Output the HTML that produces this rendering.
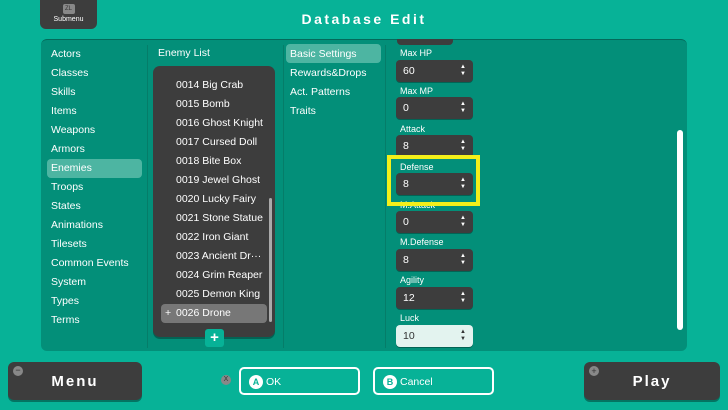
<!DOCTYPE html>
<html><head><style>
*{margin:0;padding:0;box-sizing:border-box}
body{width:728px;height:410px;background:#07b297;font-family:"Liberation Sans","DejaVu Sans",sans-serif;position:relative;overflow:hidden;color:#fff}
.a{position:absolute}
.t{font-size:10.5px;white-space:nowrap}
.box{position:absolute;left:396px;width:77px;height:22px;background:#3d3d3d;border-radius:4px;font-size:10.5px;padding:5px 0 0 7px;box-shadow:0 1px 0 rgba(0,0,0,.3)}
.box:after{content:"▲\A▼";white-space:pre;position:absolute;right:7px;top:4px;font-size:6px;line-height:7px}
.lbl{position:absolute;left:400px;font-size:9px}
.btn{position:absolute;background:#3d3d3d;border-radius:6px;font-weight:bold;font-size:15px;letter-spacing:2px;text-align:center;box-shadow:0 2px 0 rgba(0,0,0,.35)}
.ob{position:absolute;border:2px solid #fff;border-radius:5px;height:28px;width:121px;font-size:10.5px;padding:6px 0 0 8px}
.ob i{display:inline-block;width:14px;height:14px;border-radius:7px;background:#fff;color:#07b297;font-style:normal;font-size:9px;text-align:center;line-height:14px;margin-right:3px;font-weight:bold}
</style></head><body>
<div class="a" style="left:40px;top:0;width:57px;height:29px;background:#3d3d3d;border-radius:0 0 6px 6px;text-align:center;font-size:7px;padding-top:4px"><div style="width:12px;height:10px;background:#888;margin:0 auto 2px;border-radius:2px;font-size:6px;line-height:10px;color:#333">ZL</div>Submenu</div>
<div class="a" style="left:0;width:728px;top:11px;text-align:center;font-size:14px;font-weight:bold;letter-spacing:2.5px">Database Edit</div>
<div class="a" style="left:41px;top:39px;width:646px;height:312px;background:#038f79;border-radius:6px;border-top:1px solid #046a5a"></div>
<div class="a" style="left:147px;top:45px;width:1px;height:303px;background:#057d69"></div>
<div class="a" style="left:283px;top:45px;width:1px;height:303px;background:#057d69"></div>
<div class="a" style="left:385px;top:45px;width:1px;height:303px;background:#057d69"></div>
<div class="a" style="left:47px;top:159px;width:95px;height:19px;background:#4db5a2;border-radius:4px"></div>
<div class="a t" style="left:51px;top:45px;line-height:19px">Actors<br>Classes<br>Skills<br>Items<br>Weapons<br>Armors<br>Enemies<br>Troops<br>States<br>Animations<br>Tilesets<br>Common Events<br>System<br>Types<br>Terms</div>
<div class="a t" style="left:158px;top:47px">Enemy List</div>
<div class="a" style="left:153px;top:66px;width:122px;height:271px;background:#3d3d3d;border-radius:7px;box-shadow:0 2px 0 rgba(0,0,0,.3)"></div>
<div class="a" style="left:161px;top:304px;width:106px;height:19px;background:#777;border-radius:4px"></div>
<div class="a" style="left:269px;top:198px;width:3px;height:124px;background:#aaa;border-radius:2px"></div>
<div class="a t" style="left:176px;top:76px;line-height:19px">0014 Big Crab<br>0015 Bomb<br>0016 Ghost Knight<br>0017 Cursed Doll<br>0018 Bite Box<br>0019 Jewel Ghost<br>0020 Lucky Fairy<br>0021 Stone Statue<br>0022 Iron Giant<br>0023 Ancient Dr···<br>0024 Grim Reaper<br>0025 Demon King<br>0026 Drone</div>
<div class="a t" style="left:165px;top:304px;line-height:19px">+</div>
<div class="a" style="left:205px;top:329px;width:19px;height:18px;background:#07b297;border-radius:3px;text-align:center;font-weight:bold;font-size:15px;line-height:17px">+</div>
<div class="a" style="left:286px;top:44px;width:95px;height:19px;background:#4db5a2;border-radius:4px"></div>
<div class="a t" style="left:290px;top:45px;line-height:19px">Basic Settings<br>Rewards&amp;Drops<br>Act. Patterns<br>Traits</div>
<div class="a" style="left:397px;top:39px;width:56px;height:6px;background:#3d3d3d;border-radius:0 0 4px 4px"></div>
<div class="lbl" style="top:48px">Max HP</div><div class="box" style="top:60px">60</div>
<div class="lbl" style="top:86px">Max MP</div><div class="box" style="top:97px">0</div>
<div class="lbl" style="top:124px">Attack</div><div class="box" style="top:135px">8</div>
<div class="lbl" style="top:162px">Defense</div><div class="box" style="top:173px">8</div>
<div class="lbl" style="top:200px">M.Attack</div><div class="box" style="top:211px">0</div>
<div class="lbl" style="top:237px">M.Defense</div><div class="box" style="top:249px">8</div>
<div class="lbl" style="top:275px">Agility</div><div class="box" style="top:287px">12</div>
<div class="lbl" style="top:313px">Luck</div><div class="box" style="top:325px;background:#e3f3ef;color:#333">10</div>
<div class="a" style="left:387px;top:155px;width:93px;height:51px;border:4px solid #f4ef1a"></div>
<div class="a" style="left:677px;top:130px;width:6px;height:200px;background:#fff;border-radius:3px"></div>
<div class="btn" style="left:8px;top:362px;width:134px;height:38px;line-height:40px">Menu</div>
<div class="a" style="left:13px;top:366px;width:10px;height:10px;border-radius:5px;background:#888;font-size:9px;line-height:9px;text-align:center;color:#333">−</div>
<div class="btn" style="left:584px;top:362px;width:136px;height:38px;line-height:40px">Play</div>
<div class="a" style="left:589px;top:366px;width:10px;height:10px;border-radius:5px;background:#888;font-size:9px;line-height:10px;text-align:center;color:#333">+</div>
<div class="a" style="left:221px;top:375px;width:10px;height:10px;border-radius:5px;background:#888;font-size:7px;line-height:10px;text-align:center;color:#333">X</div>
<div class="ob" style="left:239px;top:367px"><i>A</i>OK</div>
<div class="ob" style="left:373px;top:367px"><i>B</i>Cancel</div>
</body></html>
